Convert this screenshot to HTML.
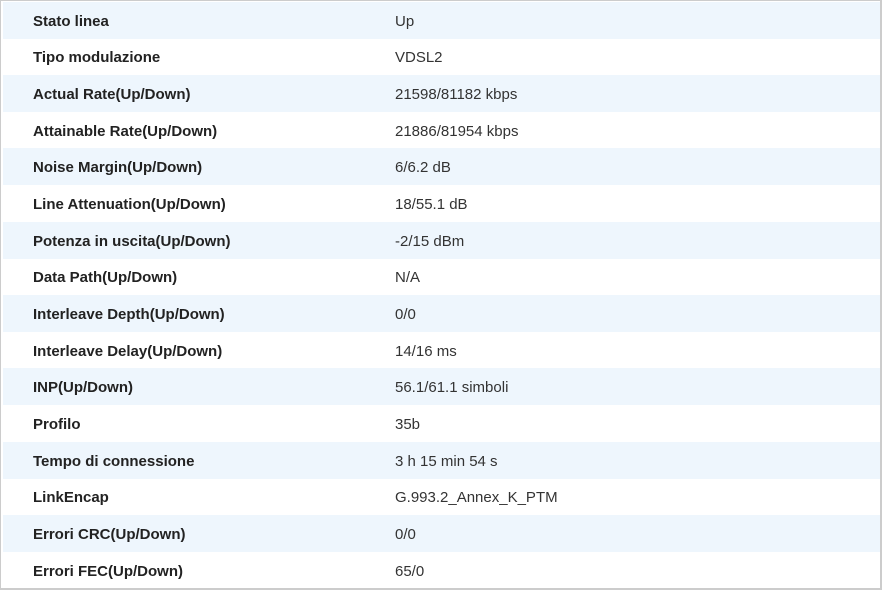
<!DOCTYPE html>
<html><head><style>
body{margin:0;width:882px;height:592px;background:#fff;font-family:"Liberation Sans","Noto Sans CJK SC",sans-serif;font-size:15px;color:#333;position:relative;overflow:hidden}
.frame{position:absolute;left:0;top:0;width:882px;height:590px;border:1px solid #ccc;border-bottom:2px solid #ccc;border-right:2px solid #ccc;box-sizing:border-box}
.r{position:absolute;left:3px;width:877px;height:37px;line-height:39px}
.r.a{background:#eef6fd}
.l{position:absolute;left:30px;font-weight:bold;color:#222}
.v{position:absolute;left:392px}
</style></head><body>
<div class="frame"></div>
<div class="r a" style="top:2px"><span class="l">Stato linea</span><span class="v">Up</span></div>
<div class="r" style="top:38px"><span class="l">Tipo modulazione</span><span class="v">VDSL2</span></div>
<div class="r a" style="top:75px"><span class="l">Actual Rate(Up/Down)</span><span class="v">21598/81182 kbps</span></div>
<div class="r" style="top:112px"><span class="l">Attainable Rate(Up/Down)</span><span class="v">21886/81954 kbps</span></div>
<div class="r a" style="top:148px"><span class="l">Noise Margin(Up/Down)</span><span class="v">6/6.2 dB</span></div>
<div class="r" style="top:185px"><span class="l">Line Attenuation(Up/Down)</span><span class="v">18/55.1 dB</span></div>
<div class="r a" style="top:222px"><span class="l">Potenza in uscita(Up/Down)</span><span class="v">-2/15 dBm</span></div>
<div class="r" style="top:258px"><span class="l">Data Path(Up/Down)</span><span class="v">N/A</span></div>
<div class="r a" style="top:295px"><span class="l">Interleave Depth(Up/Down)</span><span class="v">0/0</span></div>
<div class="r" style="top:332px"><span class="l">Interleave Delay(Up/Down)</span><span class="v">14/16 ms</span></div>
<div class="r a" style="top:368px"><span class="l">INP(Up/Down)</span><span class="v">56.1/61.1 simboli</span></div>
<div class="r" style="top:405px"><span class="l">Profilo</span><span class="v">35b</span></div>
<div class="r a" style="top:442px"><span class="l">Tempo di connessione</span><span class="v">3 h 15 min 54 s</span></div>
<div class="r" style="top:478px"><span class="l">LinkEncap</span><span class="v">G.993.2_Annex_K_PTM</span></div>
<div class="r a" style="top:515px"><span class="l">Errori CRC(Up/Down)</span><span class="v">0/0</span></div>
<div class="r" style="top:552px"><span class="l">Errori FEC(Up/Down)</span><span class="v">65/0</span></div>
</body></html>
